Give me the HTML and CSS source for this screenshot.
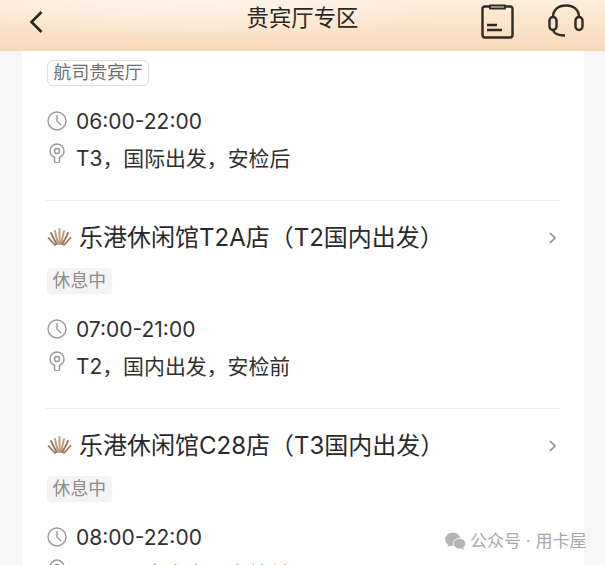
FILE: index.html
```html
<!DOCTYPE html>
<html lang="zh-CN">
<head>
<meta charset="utf-8">
<title>贵宾厅专区</title>
<link rel="stylesheet" href="styles.css">
</head>
<body>
<div class="page">
  <header class="topbar">
    <svg class="back" width="16" height="26" viewBox="0 0 16 26"><path d="M13.500 3 3.500 13l10 10" fill="none" stroke="#2b2622" stroke-width="2.6"/></svg>
    <h1 class="title">贵宾厅专区</h1>
    <div class="actions">
      <svg width="33" height="35" viewBox="0 0 33 35" fill="none" stroke="#2f2a26" stroke-width="2.400"><path d="M9 2.500H4Q1.500 2.500 1.500 5V31q0 2.500 2.500 2.500h25q2.500 0 2.500-2.500V5Q31.500 2.500 29 2.500h-5"/><path d="M9 1.500h15V4.500H9z" stroke-width="1.800"/><path d="M6 21h10M6 26h15" stroke-width="2.400"/></svg>
      <svg width="38" height="33" viewBox="0 0 38 33" fill="none" stroke="#2f2a26" stroke-width="2.400"><path d="M6 13C6 6 11 1.500 19 1.500S32 6 32 13"/><rect x="2.500" y="13" width="7" height="13" rx="3.500"/><rect x="28.500" y="13" width="7" height="13" rx="3.500"/><path d="M6 26c1 3.500 5 5.500 12 5.500"/></svg>
    </div>
  </header>
  <main class="card">
    <section class="item first">
      <span class="tag outline">航司贵宾厅</span>
      <div class="row time">
        <svg class="ic clock" width="20" height="20" viewBox="0 0 20 20" fill="none" stroke="#999" stroke-width="1.400"><circle cx="10" cy="10" r="9"/><path d="M10 4v6l4 4"/></svg>
        <span>06:00-22:00</span>
      </div>
      <div class="row loc">
        <svg class="ic pin" width="20" height="24" viewBox="0 0 20 24" fill="none" stroke="#999" stroke-width="1.500"><path d="M7.500 18.500C5 17.300 3 15 3 12a7 7 0 0 1 14 0c0 3-2 5.300-4.500 6.500V22q0 2-2.500 2t-2.500-2z"/><circle cx="10" cy="12" r="2.500"/></svg>
        <span>T3，国际出发，安检后</span>
      </div>
    </section>
    <section class="item">
      <div class="head">
        <svg class="logo" width="25" height="20" viewBox="0 0 25 20" fill="none" stroke-linecap="round"><g stroke="#c59a7c" stroke-width="2"><path d="M12.500 17V2M11 17 8 4M14 17l3-13"/></g><g stroke="#8f7767" stroke-width="1.800"><path d="M9.500 17 4 6M15.500 17 21 6M8 18 1.500 11M17 18l6.500-7"/></g></svg>
        <h2 class="name">乐港休闲馆T2A店（T2国内出发）</h2>
        <svg class="chev" width="9" height="14" viewBox="0 0 9 14"><path d="m2 2 5 5-5 5" fill="none" stroke="#8a8a8a" stroke-width="1.600"/></svg>
      </div>
      <span class="tag">休息中</span>
      <div class="row time">
        <svg class="ic clock" width="20" height="20" viewBox="0 0 20 20" fill="none" stroke="#999" stroke-width="1.400"><circle cx="10" cy="10" r="9"/><path d="M10 4v6l4 4"/></svg>
        <span>07:00-21:00</span>
      </div>
      <div class="row loc">
        <svg class="ic pin" width="20" height="24" viewBox="0 0 20 24" fill="none" stroke="#999" stroke-width="1.500"><path d="M7.500 18.500C5 17.300 3 15 3 12a7 7 0 0 1 14 0c0 3-2 5.300-4.500 6.500V22q0 2-2.500 2t-2.500-2z"/><circle cx="10" cy="12" r="2.500"/></svg>
        <span>T2，国内出发，安检前</span>
      </div>
    </section>
    <section class="item">
      <div class="head">
        <svg class="logo" width="25" height="20" viewBox="0 0 25 20" fill="none" stroke-linecap="round"><g stroke="#c59a7c" stroke-width="2"><path d="M12.500 17V2M11 17 8 4M14 17l3-13"/></g><g stroke="#8f7767" stroke-width="1.800"><path d="M9.500 17 4 6M15.500 17 21 6M8 18 1.500 11M17 18l6.500-7"/></g></svg>
        <h2 class="name">乐港休闲馆C28店（T3国内出发）</h2>
        <svg class="chev" width="9" height="14" viewBox="0 0 9 14"><path d="m2 2 5 5-5 5" fill="none" stroke="#8a8a8a" stroke-width="1.600"/></svg>
      </div>
      <span class="tag">休息中</span>
      <div class="row time">
        <svg class="ic clock" width="20" height="20" viewBox="0 0 20 20" fill="none" stroke="#999" stroke-width="1.400"><circle cx="10" cy="10" r="9"/><path d="M10 4v6l4 4"/></svg>
        <span>08:00-22:00</span>
      </div>
      <div class="row loc">
        <svg class="ic pin" width="20" height="24" viewBox="0 0 20 24" fill="none" stroke="#999" stroke-width="1.500"><path d="M7.500 18.500C5 17.300 3 15 3 12a7 7 0 0 1 14 0c0 3-2 5.300-4.500 6.500V22q0 2-2.500 2t-2.500-2z"/><circle cx="10" cy="12" r="2.500"/></svg>
        <span>T3，国内出发，安检前</span>
      </div>
    </section>
  </main>
  <div class="mark">
    <svg width="23" height="18" viewBox="0 0 24 20" fill="#b4b4b4"><ellipse cx="9" cy="8" rx="8.500" ry="7.500"/><path d="m4 13-1 4 5-3z"/><ellipse cx="16.500" cy="13" rx="7" ry="6" stroke="#fff" stroke-width="1"/><path d="m20 17 2 3-4-2z"/></svg>
    <span>公众号 · 用卡屋</span>
  </div>
</div>
</body>
</html>
```

FILE: styles.css
```css
html, body {
  margin: 0;
  height: 100%;
  overflow: hidden;
  background: #f6f6f7;
}
.page {
  position: relative;
  width: 605px;
  height: 565px;
  overflow: hidden;
  font-family: "Inter", "Noto Sans CJK SC", sans-serif;
  color: #303030;
}
.topbar {
  height: 51px;
  position: relative;
  display: flex;
  align-items: center;
  justify-content: space-between;
  padding: 0 20px 0 28px;
  background:
    radial-gradient(ellipse 260px 40px at 200px 0, rgba(255, 245, 235, .8), rgba(255, 245, 235, 0)),
    linear-gradient(to bottom, #fdeedd 0%, #fae3c9 55%, #f8d8b9 100%);
}
.back { margin-top: -7px; }
.title {
  position: absolute;
  left: 0;
  right: 0;
  top: 3px;
  margin: 0;
  text-align: center;
  font-size: 22.4px;
  line-height: 30px;
  font-weight: 400;
  color: #2b2724;
}
.actions {
  display: flex;
  gap: 33px;
  align-items: flex-start;
  margin-top: -9px;
}
.card {
  margin: 0 21px 0 22px;
  background: #fff;
  padding: 9px 24px 0;
}
.item {
  border-top: 1px solid #ececec;
  padding-top: 21px;
  height: 186px;
}
.item.first {
  border-top: 0;
  padding-top: 0;
  height: 140px;
}
.head {
  display: flex;
  align-items: center;
  height: 32px;
  padding-left: 1px;
}
.logo { margin-top: -3px; margin-right: 7px; flex: none; }
.name {
  flex: 1;
  margin: 0;
  font-size: 24px;
  line-height: 32px;
  font-weight: 400;
  color: #2a2a2a;
  white-space: nowrap;
}
.chev { flex: none; margin-right: 3px; }
.tag {
  display: inline-block;
  margin-top: 14px;
  margin-left: 1px;
  padding: 0 5.600px;
  height: 26px;
  line-height: 26px;
  font-size: 17.800px;
  color: #8a8a8a;
  background: #f4f4f4;
  border-radius: 4px;
}
.tag.outline {
  margin-top: 0;
  box-sizing: border-box;
  background: #fff;
  border: 1px solid #dedede;
  border-radius: 6px;
  line-height: 24px;
  color: #6e6e6e;
}
.row {
  display: flex;
  align-items: center;
  padding-left: 1px;
}
.row .ic { flex: none; margin-right: 9px; }
.clock { margin-top: -2px; }
.time {
  margin-top: 21px;
  height: 30px;
  font-size: 21px;
  line-height: 30px;
}
.loc {
  margin-top: 7px;
  height: 30px;
  font-size: 20.900px;
  line-height: 30px;
}
.pin { margin-top: -16px; }
.mark {
  position: absolute;
  left: 444px;
  top: 531px;
  display: flex;
  align-items: center;
  gap: 3px;
  font-size: 17px;
  line-height: 20px;
  color: #a8a8a8;
}
```
